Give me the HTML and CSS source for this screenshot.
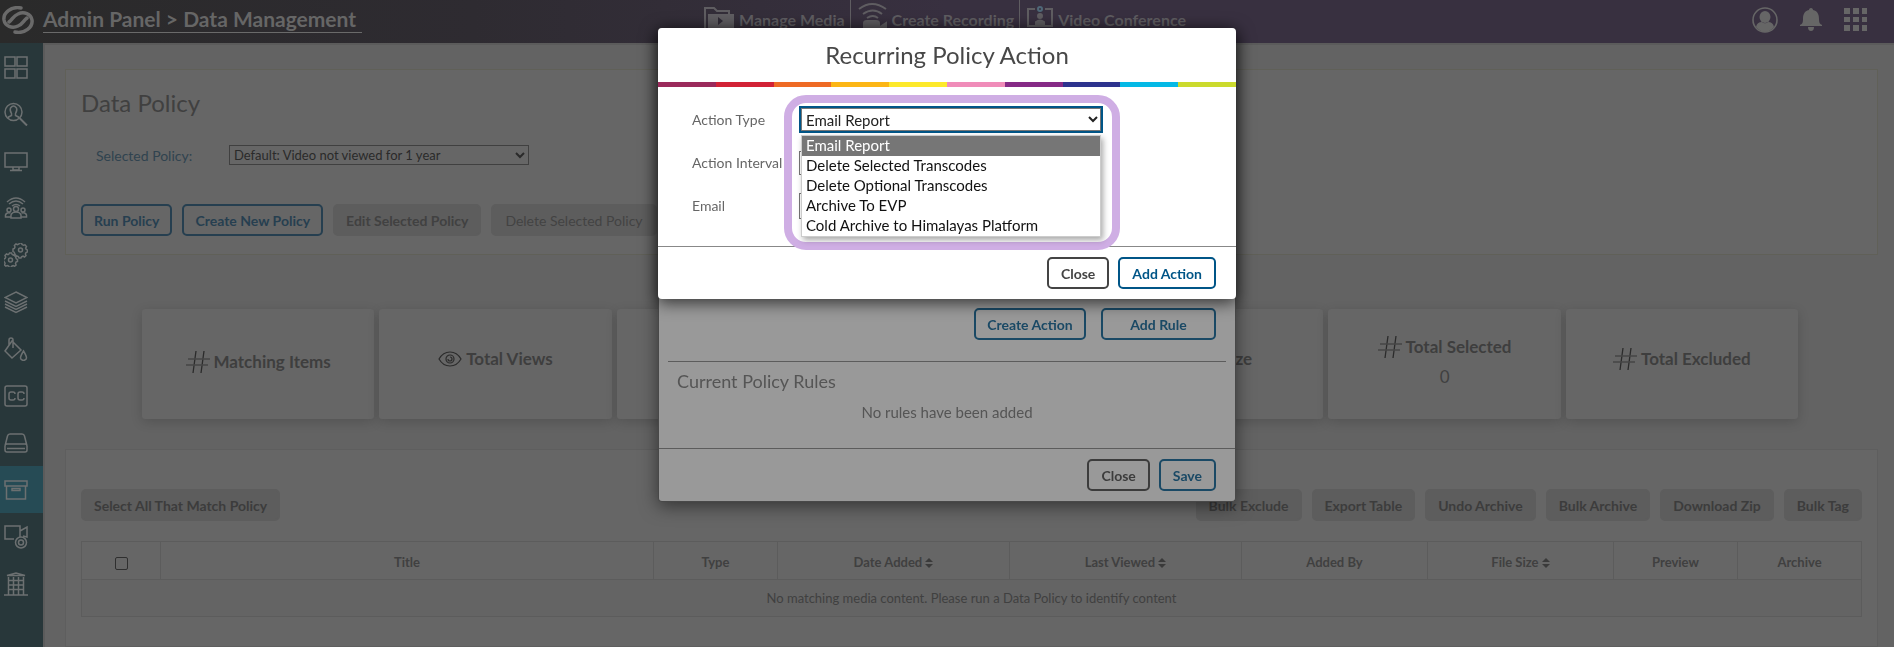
FILE: index.html
```html
<!DOCTYPE html>
<html lang="en">
<head>
<meta charset="utf-8">
<title>Admin Panel - Data Management</title>
<link rel="stylesheet" href="styles.css">
</head>
<body>
<svg class="defs" aria-hidden="true">
  <symbol id="hash" viewBox="0 0 24 24"><path d="M10 1 7 23M18 1l-3 22" stroke="#2b2b2b" stroke-width="1.3"/><path d="M2 9h22M0 15h22" stroke="#454545" stroke-width="1.5"/></symbol>
  <symbol id="sort" viewBox="0 0 8 12"><path d="M4 1l4 4H0zM4 11l4-4H0z" fill="#3a3a3a"/></symbol>
</svg>
<div class="app">
  <header class="topbar">
    <svg class="logo" viewBox="0 0 32 28" fill="none" stroke="#6a6a6a" stroke-width="3.5" stroke-linecap="round"><path d="M19 2C9 0 1 7 2 14c1 6 8 9 14 6 5-2 5-5 9-8"/><path d="M13 26c10 2 18-5 17-12-1-6-8-9-14-6-5 2-5 5-9 8"/></svg>
    <a class="crumb" href="#">Admin Panel &gt; Data Management</a>
    <nav class="quick">
      <a href="#"><svg width="30" height="28" viewBox="0 0 30 28"><path d="M1 22V2h9l3 3h12v3M1 2v24" fill="none" stroke="#5f5d61" stroke-width="2"/><path d="M4 8h26v20H4z" fill="#5f5d61"/><path d="M14 11v8l5-4z" fill="#302b36"/></svg>Manage Media</a>
      <a href="#"><svg class="cast" width="29" height="32" viewBox="0 0 29 32" fill="none" stroke="#5f5d61" stroke-width="2"><path d="M1 7q13-10 27 0M5 12q10-7 19 0M9 16q6-4 11 0"/><path d="M6 31V21q0-2 3-2h9q3 0 3 2v10zM22 25l6-4v9z" fill="#5f5d61"/></svg>Create Recording</a>
      <a href="#"><svg width="26" height="28" viewBox="0 0 26 28" fill="none" stroke="#5f5d61" stroke-width="2"><path d="M8 3H1v17h24V3h-7"/><circle cx="13" cy="3" r="2" stroke="#4f6878"/><circle cx="13" cy="10" r="2" fill="#5f5d61"/><path d="M9 20v-4q4-3 8 0v4z" fill="#5f5d61"/></svg>Video Conference</a>
    </nav>
    <div class="tools">
      <button aria-label="Account"><svg width="26" height="26" viewBox="0 0 26 26"><circle cx="13" cy="13" r="12" fill="none" stroke="#666" stroke-width="1.6"/><ellipse cx="13" cy="10" rx="5.500" ry="6" fill="#666"/><path d="M4 20q1-5 6-5 3 2.500 6 0 5 0 6 5-9 10-18 0z" fill="#666"/></svg></button>
      <button aria-label="Notifications"><svg width="22" height="24" viewBox="0 0 22 24"><path d="M11 0c1.500 0 2 1 2 2 5 1 6 5 6 9 0 4 1 5 3 6v1H0v-1c2-1 3-2 3-6 0-4 1-8 6-9 0-1 .5-2 2-2zM8 19h6q0 4-3 4t-3-4z" fill="#666"/></svg></button>
      <button aria-label="Apps"><svg width="24" height="24" viewBox="0 0 24 24" fill="#666"><path d="M0 0h6v6H0zM9 0h6v6H9zM18 0h5v6h-5zM0 9h6v5H0zM9 9h6v5H9zM18 9h5v5h-5zM0 17h6v6H0zM9 17h6v6H9zM18 17h5v6h-5z"/></svg></button>
    </div>
  </header>
  <div class="body">
    <nav class="side">
      <a href="#" aria-label="Dashboard"><svg viewBox="0 0 24 24"><path d="M1 2h10v9H1zM13 2h10v9H13zM1 14h10v9H1zM13 14h10v9H13z"/></svg></a>
      <a href="#" aria-label="User search"><svg viewBox="0 0 24 24"><circle cx="9.500" cy="10" r="8.500"/><path d="M15.500 16 23 23.500" stroke-width="2"/><path d="M4.500 16v-1l3-1.500v-2Q5.500 8 6.500 6q3-4 6 0 1 2-1 5.500v2l3 1.500v1"/></svg></a>
      <a href="#" aria-label="Displays"><svg viewBox="0 0 24 24"><path d="M1 4h22v14H1zM9 18v3h6v-3M6 21.500h12"/></svg></a>
      <a href="#" aria-label="Audience"><svg viewBox="0 0 24 24"><path d="M3 6q9-8 18 0M5 8q7-6 14 0M8 10q4-3 8 0"/><circle cx="12" cy="13" r="2.500"/><circle cx="5" cy="14" r="2"/><circle cx="19" cy="14" r="2"/><path d="M7 22v-3q1-3 5-3t5 3v3zM7 21H1.500v-2q1-3 5-2M17 21h5.500v-2q-1-3-5-2"/></svg></a>
      <a href="#" aria-label="Settings"><svg viewBox="0 0 24 24"><circle cx="16.500" cy="7" r="2"/><path d="m15 1 .5-1h2l.5 1.500 1.500.8 1.500-.5 1.500 1.700-.8 1.500.5 1.500 1.300.5v2l-1.500.6-.6 1.400.6 1.500-1.500 1.500-1.500-.8-1.500.6-.5 1.200h-2l-.6-1.400-1.400-.6-1.500.6-1.500-1.500.7-1.500-.5-1.400-1.200-.6V6l1.400-.6.6-1.400-.6-1.500L12 1l1.500.7z"/><path d="m5 11 .5-1h2l.7 1.500 1.300.6 1.500-.6 1.400 1.500-.7 1.500.6 1.300 1.200.7v2l-1.500.6-.5 1.300.6 1.600-1.500 1.300-1.500-.7-1.300.6-.6 1.100h-2l-.6-1.300-1.300-.5-1.500.6L.5 22l.6-1.600-.6-1.300L-.5 18v-2l1.600-.5.6-1.400L1 12.500 2.500 11l1.500.7z"/><circle cx="6.500" cy="17" r="2"/></svg></a>
      <a href="#" aria-label="Layers"><svg viewBox="0 0 24 24"><path d="m12 2 11 5.500L12 13 1 7.500zM1 11l11 5.500L23 11M1 14l11 5.500L23 14M1 17l11 5.500L23 17"/></svg></a>
      <a href="#" aria-label="Theme"><svg viewBox="0 0 24 24"><path d="M8 4 17 13l-9 8-7-7zM9 11V3q0-2-2-2T5 3v5"/><path d="M19.500 14q-3 5-3 7t3 2.500q3-.5 3-2.500t-3-7z"/></svg></a>
      <a href="#" aria-label="Captions"><svg viewBox="0 0 24 24"><rect x="1" y="2" width="22" height="20" rx="2"/><path d="M11 10q0-2-2-2H7q-2 0-2 2v4q0 2 2 2h2q2 0 2-2M20 10q0-2-2-2h-2q-2 0-2 2v4q0 2 2 2h2q2 0 2-2"/></svg></a>
      <a href="#" aria-label="Storage"><svg viewBox="0 0 24 24"><path d="M1 15 3.500 5q.5-2 2.500-2h12q2 0 2.500 2L23 15M3 13h18q2 0 2 2v4q0 2-2 2H3q-2 0-2-2v-4q0-2 2-2zM3 17.500h18"/></svg></a>
      <a class="active" href="#" aria-label="Archive"><svg viewBox="0 0 24 24"><path d="M1 3h22v5H1zM2.500 8v13h19V8M8 10.500h8v2H8z"/></svg></a>
      <a href="#" aria-label="Recording"><svg viewBox="0 0 24 24"><path d="M10 14H1V1h15v11M16 6l7-4v10l-4-1"/><circle cx="17" cy="17.500" r="5.500"/><circle cx="17" cy="17.500" r="2.500"/></svg></a>
      <a href="#" aria-label="Organization"><svg viewBox="0 0 24 24"><path d="M3 3.500 12 1l9 2.500zM4.500 5v18M19.500 5v18M0 23h24M4 8.500h16M4 13h16M4 17.500h16M9.500 5v18M14.500 5v18"/></svg></a>
    </nav>
    <main>
      <section class="panel">
        <h1>Data Policy</h1>
        <div class="field"><label for="policy">Selected Policy:</label>
          <select id="policy"><option>Default: Video not viewed for 1 year</option></select></div>
        <div class="btns">
          <button class="btn blue">Run Policy</button><button class="btn blue">Create New Policy</button><button class="btn flat soft">Edit Selected Policy</button><button class="btn flat thin" disabled>Delete Selected Policy</button>
        </div>
      </section>
      <section class="cards">
        <div class="card low"><p><svg class="ic"><use href="#hash"/></svg>Matching Items</p></div>
        <div class="card"><p><svg class="eye" viewBox="0 0 24 16" fill="none" stroke="#2b2b2b" stroke-width="1.2"><path d="M1 8Q5 1 12 1t11 7q-4 7-11 7T1 8z"/><circle cx="12" cy="8" r="4"/><path d="M12 6q2 0 2 2t-2 2-2-2"/></svg>Total Views</p></div>
        <div class="card"></div>
        <div class="card"></div>
        <div class="card"><p><svg class="ic"><use href="#hash"/></svg>File Size</p></div>
        <div class="card low"><p><svg class="ic"><use href="#hash"/></svg>Total Selected</p><span>0</span></div>
        <div class="card"><p><svg class="ic"><use href="#hash"/></svg>Total Excluded</p></div>
      </section>
      <section class="panel results">
        <div class="btns">
          <button class="btn flat first">Select All That Match Policy</button>
          <button class="btn flat">Bulk Exclude</button><button class="btn flat">Export Table</button><button class="btn flat">Undo Archive</button><button class="btn flat">Bulk Archive</button><button class="btn flat">Download Zip</button><button class="btn flat">Bulk Tag</button>
        </div>
        <table>
          <colgroup><col class="c1"><col class="c2"><col class="c3"><col class="c4"><col class="c4"><col class="c5"><col class="c5"><col class="c3"><col class="c3"></colgroup>
          <thead><tr><th><input type="checkbox" aria-label="Select all"></th><th>Title</th><th>Type</th><th>Date Added <svg class="sort"><use href="#sort"/></svg></th><th>Last Viewed <svg class="sort"><use href="#sort"/></svg></th><th>Added By</th><th>File Size <svg class="sort"><use href="#sort"/></svg></th><th>Preview</th><th>Archive</th></tr></thead>
          <tbody><tr><td colspan="9">No matching media content. Please run a Data Policy to identify content</td></tr></tbody>
        </table>
      </section>
    </main>
  </div>
</div>

<div class="modal rules" role="dialog" aria-label="Policy rules">
  <div class="row-btns"><button class="btn dimblue">Create Action</button><button class="btn dimblue wide">Add Rule</button></div>
  <div class="current"><h3>Current Policy Rules</h3><p>No rules have been added</p></div>
  <footer><button class="btn dimgrey">Close</button><button class="btn dimblue">Save</button></footer>
</div>

<div class="modal action" role="dialog" aria-labelledby="action-title">
  <h2 id="action-title">Recurring Policy Action</h2>
  <div class="stripe"><i></i><i></i><i></i><i></i><i></i><i></i><i></i><i></i><i></i><i></i></div>
  <form class="form">
    <label for="type">Action Type</label>
    <div class="combo">
      <select id="type"><option>Email Report</option></select>
      <ul class="list" role="listbox"><li class="on" role="option" aria-selected="true">Email Report</li><li role="option">Delete Selected Transcodes</li><li role="option">Delete Optional Transcodes</li><li role="option">Archive To EVP</li><li role="option">Cold Archive to Himalayas Platform</li></ul>
      <div class="ring"></div>
    </div>
    <label for="interval">Action Interval</label><select id="interval" class="plain"></select>
    <label for="email">Email</label><input id="email" type="text">
  </form>
  <footer><button class="btn dark">Close</button><button class="btn bright">Add Action</button></footer>
</div>
</body>
</html>
```

FILE: styles.css
```css
* { box-sizing: border-box; }
body { margin: 0; background: #636363; color: #404040; font-family: Lato, "Open Sans", sans-serif; font-size: 15px; overflow: hidden; }
button, select, input { font: inherit; color: inherit; margin: 0; }
h1, h2, h3, p, ul { margin: 0; padding: 0; font-weight: 400; }
a { color: inherit; text-decoration: none; }
.defs { position: absolute; width: 0; height: 0; }
.app { display: flex; flex-direction: column; height: 100vh; }

.topbar { display: flex; align-items: flex-start; height: 43px; flex: none; position: relative; background: linear-gradient(90deg, #2a2a2a, #2e2b31 25%, #383040 50%, #383040); color: #666; }
.logo { width: 32px; height: 28px; margin: 6px 9px 0 2px; }
.crumb { font-size: 21px; font-weight: 700; line-height: 26px; padding: 6px 6px 0 0; border-bottom: 1px solid #6a6a6a; }
.quick { position: absolute; left: 697px; top: 0; display: flex; color: #5f5d61; font-weight: 700; font-size: 16px; }
.quick a { display: flex; align-items: center; gap: 5px; height: 38px; padding: 0 5px 0 7px; border-right: 1px solid #5f5d61; }
.quick a:last-child { border: 0; }
.quick svg { align-self: flex-start; margin-top: 6px; }
.quick .cast { margin-top: 2px; }
.tools { margin-left: auto; display: flex; align-items: center; height: 40px; gap: 22px; padding-right: 26px; }
.tools button { border: 0; background: none; padding: 0; display: flex; }

.body { display: flex; flex: 1; min-height: 0; }
.side { width: 43px; flex: none; background: #28373a; }
.side a { display: flex; align-items: center; height: 47px; padding-left: 4px; }
.side .active { background: #264b55; }
.side svg { width: 24px; height: 24px; fill: none; stroke: #6c7071; stroke-width: 1.5; }
main { flex: 1; min-width: 0; display: flex; flex-direction: column; padding: 26px 16px 0 22px; box-shadow: inset 2px 2px 0 #5b5b5b; }
.panel { background: #666; border: 1px solid #606058; padding: 0 15px; }
h1 { font-size: 24px; line-height: 30px; padding-top: 18px; }
.field { display: flex; align-items: center; padding: 27px 0 0 15px; color: #30434f; }
.field label { width: 133px; font-size: 14px; }
.field select { width: 300px; height: 20px; font-size: 13px; line-height: 16px; padding: 0; background: #666; color: #2a2a2a; border: 1px solid #404040; }
.btns { display: flex; gap: 10px; }
.field + .btns { padding: 39px 0 18px; }
.btn { height: 32px; border: 2px solid; border-radius: 5px; padding: 0 11px; font-size: 14px; font-weight: 700; background: none; white-space: nowrap; }
.blue { color: #263f50; }
.flat { border-color: #5d5d5d; background: #5d5d5d; color: #3c3c3c; }
.soft { color: #414141; }
.thin { font-weight: 400; color: #434343; padding: 0 12px; }

.cards { display: grid; grid-template-columns: repeat(7, 1fr); gap: 5px; padding: 54px 80px 30px 77px; }
.card { height: 110px; background: #666; border-radius: 3px; box-shadow: 0 3px 12px rgba(0,0,0,.16); display: flex; flex-direction: column; align-items: center; justify-content: center; font-size: 17px; padding-bottom: 11px; }
.card.low { padding-bottom: 5px; }
.card p { display: flex; align-items: center; gap: 4px; font-weight: 700; line-height: 30px; color: #3e3e3e; }
.card span { line-height: 30px; }
.ic { width: 24px; height: 24px; }
.eye { width: 24px; height: 16px; }

.results { flex: 1; padding-top: 39px; border-color: #5e5e5e; }
.first { margin-right: auto; }
table { width: 100%; margin-top: 20px; border-collapse: collapse; table-layout: fixed; font-size: 13px; text-align: center; }
th, td { border: 1px solid #5c5c5c; height: 38px; padding: 0; }
th { padding-top: 2px; }
td { background: #646464; height: 37px; }
.c1 { width: 79px; } .c3 { width: 124px; } .c4 { width: 232px; } .c5 { width: 186px; }
th input { appearance: none; width: 13px; height: 13px; border: 1px solid #2f2f2f; border-radius: 2px; vertical-align: middle; }
.sort { width: 8px; height: 12px; vertical-align: -2px; }

.modal { position: fixed; left: 0; right: 0; margin: 0 auto; width: 578px; border-radius: 4px; }
.modal footer { display: flex; justify-content: flex-end; border-top: 1px solid #888; padding: 10px 20px; gap: 9px; }
.modal footer .btn { padding: 0 12px; }
.rules { top: 28px; padding-top: 280px; background: #999; color: #555; box-shadow: 0 4px 18px rgba(0,0,0,.5); border: 1px solid #484848; border-top: 0; }
.row-btns { display: flex; justify-content: flex-end; gap: 15px; padding: 0 19px 21px; }
.row-btns .btn { min-width: 112px; }
.row-btns .wide { min-width: 115px; }
.current { margin: 0 9px; border-top: 1px solid #5c5c5c; padding: 8px 9px 14px; }
h3 { font-size: 18px; line-height: 22px; }
.current p { text-align: center; font-size: 15px; line-height: 20px; padding: 10px 0 12px; }
.rules footer { border-color: #5c5c5c; padding: 10px 19px; }
.dimblue { color: #1a4965; }
.dimgrey { color: #3c3c3c; }
.action { top: 28px; background: #fff; box-shadow: 0 4px 16px rgba(0,0,0,.65); color: #666; }
h2 { font-size: 24px; line-height: 54px; text-align: center; color: #484848; }
.stripe { display: grid; grid-template-columns: repeat(10, 1fr); height: 5px; }
.stripe i:nth-child(1) { background: #9b2a5b; } .stripe i:nth-child(2) { background: #d22236; }
.stripe i:nth-child(3) { background: #ee6a24; } .stripe i:nth-child(4) { background: #fcb615; }
.stripe i:nth-child(5) { background: #fde92b; } .stripe i:nth-child(6) { background: #f08cb9; }
.stripe i:nth-child(7) { background: #862a86; } .stripe i:nth-child(8) { background: #2d338e; }
.stripe i:nth-child(9) { background: #04b9e6; } .stripe i:nth-child(10) { background: #cbda2d; }
.form { display: grid; grid-template-columns: 107px 304px; align-items: center; row-gap: 18px; padding: 19px 0 27px 34px; line-height: 24px; }
.form label { font-size: 14px; }
.combo { position: relative; }
#type { display: block; width: 100%; height: 27px; border: 2px solid #005587; box-shadow: inset 0 0 0 1px #767676; background: #fff; color: #222; padding: 0 1px; }
.plain, .form input { width: 300px; height: 24px; border: 1px solid #767676; background: #fff; }
.form input { height: 26px; }
.list { position: absolute; z-index: 2; left: 2px; top: 29px; width: 300px; border: 1px solid #ccc; background: #fff; color: #111; list-style: none; box-shadow: 2px 3px 6px rgba(0,0,0,.35); }
.list li { line-height: 18px; padding: 0 0 2px 4px; }
.list .on { background: #767676; color: #fff; }
.ring { position: absolute; z-index: 1; left: -15px; top: -11px; width: 336px; height: 155px; border: 8px solid #cfaee4; border-radius: 22px; pointer-events: none; }
.dark { color: #444; }
.bright { color: #005587; }
```
